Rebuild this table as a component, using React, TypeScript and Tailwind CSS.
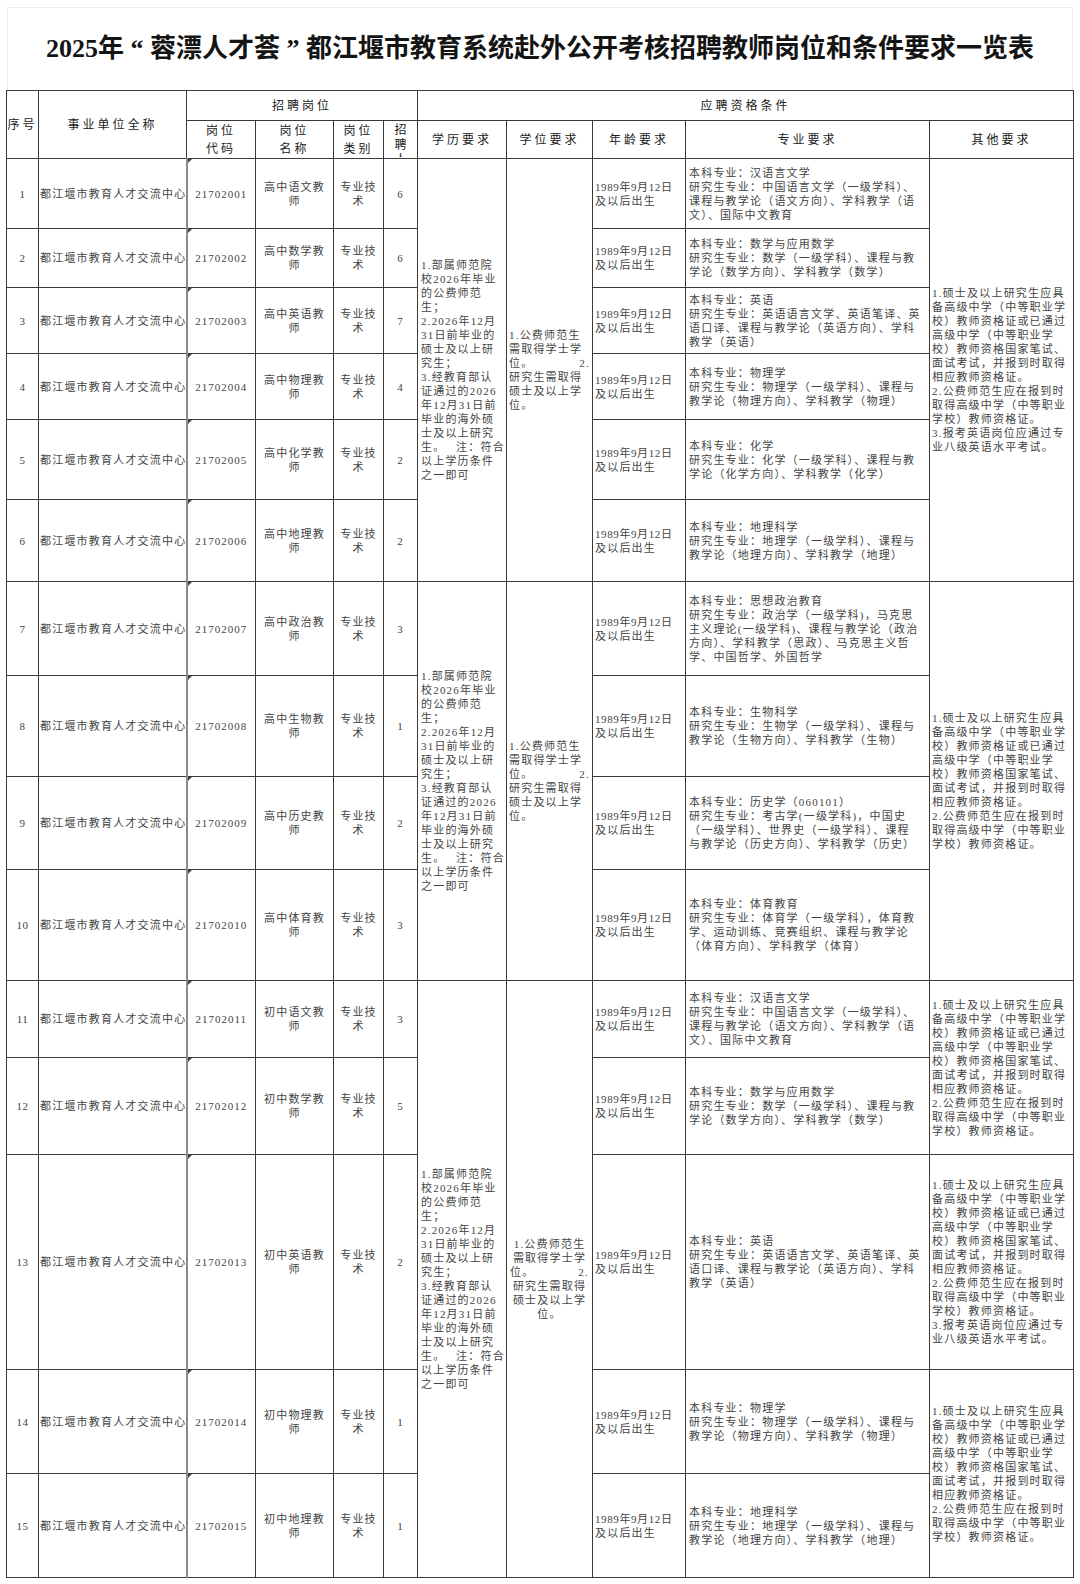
import React from "react";

const B = "border border-[#3a3a3a] p-0 align-middle";

const M: Record<string, string[]> = {
  yuwen: [
    "本科专业：汉语言文学",
    "研究生专业：中国语言文学（一级学科）、",
    "课程与教学论（语文方向）、学科教学（语",
    "文）、国际中文教育",
  ],
  shuxue: [
    "本科专业：数学与应用数学",
    "研究生专业：数学（一级学科）、课程与教",
    "学论（数学方向）、学科教学（数学）",
  ],
  yingyu: [
    "本科专业：英语",
    "研究生专业：英语语言文学、英语笔译、英",
    "语口译、课程与教学论（英语方向）、学科",
    "教学（英语）",
  ],
  wuli: [
    "本科专业：物理学",
    "研究生专业：物理学（一级学科）、课程与",
    "教学论（物理方向）、学科教学（物理）",
  ],
  huaxue: [
    "本科专业：化学",
    "研究生专业：化学（一级学科）、课程与教",
    "学论（化学方向）、学科教学（化学）",
  ],
  dili: [
    "本科专业：地理科学",
    "研究生专业：地理学（一级学科）、课程与",
    "教学论（地理方向）、学科教学（地理）",
  ],
  zhengzhi: [
    "本科专业：思想政治教育",
    "研究生专业：政治学（一级学科)，马克思",
    "主义理论(一级学科)、课程与教学论（政治",
    "方向）、学科教学（思政）、马克思主义哲",
    "学、中国哲学、外国哲学",
  ],
  shengwu: [
    "本科专业：生物科学",
    "研究生专业：生物学（一级学科）、课程与",
    "教学论（生物方向）、学科教学（生物）",
  ],
  lishi: [
    "本科专业：历史学（060101）",
    "研究生专业：考古学(一级学科)，中国史",
    "（一级学科）、世界史（一级学科）、课程",
    "与教学论（历史方向）、学科教学（历史）",
  ],
  tiyu: [
    "本科专业：体育教育",
    "研究生专业：体育学（一级学科），体育教",
    "学、运动训练、竞赛组织、课程与教学论",
    "（体育方向）、学科教学（体育）",
  ],
};

type Row = { no: string; code: string; name: string; cnt: string; h: string; major: string[] };

const rows: Row[] = [
  { no: "1", code: "21702001", name: "高中语文教", cnt: "6", h: "h-[70px]", major: M.yuwen },
  { no: "2", code: "21702002", name: "高中数学教", cnt: "6", h: "h-[59px]", major: M.shuxue },
  { no: "3", code: "21702003", name: "高中英语教", cnt: "7", h: "h-[66px]", major: M.yingyu },
  { no: "4", code: "21702004", name: "高中物理教", cnt: "4", h: "h-[66px]", major: M.wuli },
  { no: "5", code: "21702005", name: "高中化学教", cnt: "2", h: "h-[80px]", major: M.huaxue },
  { no: "6", code: "21702006", name: "高中地理教", cnt: "2", h: "h-[82px]", major: M.dili },
  { no: "7", code: "21702007", name: "高中政治教", cnt: "3", h: "h-[94px]", major: M.zhengzhi },
  { no: "8", code: "21702008", name: "高中生物教", cnt: "1", h: "h-[101px]", major: M.shengwu },
  { no: "9", code: "21702009", name: "高中历史教", cnt: "2", h: "h-[93px]", major: M.lishi },
  { no: "10", code: "21702010", name: "高中体育教", cnt: "3", h: "h-[111px]", major: M.tiyu },
  { no: "11", code: "21702011", name: "初中语文教", cnt: "3", h: "h-[77px]", major: M.yuwen },
  { no: "12", code: "21702012", name: "初中数学教", cnt: "5", h: "h-[97px]", major: M.shuxue },
  { no: "13", code: "21702013", name: "初中英语教", cnt: "2", h: "h-[215px]", major: M.yingyu },
  { no: "14", code: "21702014", name: "初中物理教", cnt: "1", h: "h-[104px]", major: M.wuli },
  { no: "15", code: "21702015", name: "初中地理教", cnt: "1", h: "h-[104px]", major: M.dili },
];

const XUELI = [
  "1.部属师范院",
  "校2026年毕业",
  "的公费师范",
  "生；",
  "2.2026年12月",
  "31日前毕业的",
  "硕士及以上研",
  "究生；",
  "3.经教育部认",
  "证通过的2026",
  "年12月31日前",
  "毕业的海外硕",
  "士及以上研究",
  "生。\u3000\u00a0注：符合",
  "以上学历条件",
  "之一即可",
];

const QITA_BASE = [
  "1.硕士及以上研究生应具",
  "备高级中学（中等职业学",
  "校）教师资格证或已通过",
  "高级中学（中等职业学",
  "校）教师资格国家笔试、",
  "面试考试，并报到时取得",
  "相应教师资格证。",
  "2.公费师范生应在报到时",
  "取得高级中学（中等职业",
  "学校）教师资格证。",
];
const QITA_EN = [...QITA_BASE, "3.报考英语岗位应通过专", "业八级英语水平考试。"];

function Lines({ lines }: { lines: string[] }) {
  return (
    <>
      {lines.map((l, i) => (
        <div key={i} className="whitespace-pre">
          {l}
        </div>
      ))}
    </>
  );
}

function XueWei({ center }: { center?: boolean }) {
  return (
    <div className={center ? "px-[3px] text-center" : "px-[2px]"}>
      <div className="whitespace-pre">1.公费师范生</div>
      <div className="whitespace-pre">需取得学士学</div>
      <div className="flex justify-between">
        <span>位。</span>
        <span>2.</span>
      </div>
      <div className="whitespace-pre">研究生需取得</div>
      <div className="whitespace-pre">硕士及以上学</div>
      <div className="whitespace-pre">位。</div>
    </div>
  );
}

function QitaCell({ rowSpan, lines }: { rowSpan: number; lines: string[] }) {
  return (
    <td rowSpan={rowSpan} className={B + " pl-[2px]"}>
      <Lines lines={lines} />
    </td>
  );
}

export default function App() {
  return (
    <div className="bg-white w-[1080px] h-[1584px] pt-[7px] pl-[6px] font-['Liberation_Serif','Noto_Sans_CJK_SC',serif] text-[#444]">
      <div className="ml-[1px] w-[1066px] h-[83px] border-t border-l border-r border-[#ececec] flex items-center justify-center">
        <h1 className="text-[26px] font-bold text-[#141414] leading-none">
          2025年<span className="inline-block w-[26px] text-center">“</span>蓉漂人才荟
          <span className="inline-block w-[26px] text-center">”</span>都江堰市教育系统赴外公开考核招聘教师岗位和条件要求一览表
        </h1>
      </div>
      <table className="border-collapse table-fixed w-[1067px] text-[11px] leading-[14px] tracking-[1.2px]">
        <colgroup>
          <col className="w-[32px]" />
          <col className="w-[148px]" />
          <col className="w-[69px]" />
          <col className="w-[78px]" />
          <col className="w-[50px]" />
          <col className="w-[34px]" />
          <col className="w-[89px]" />
          <col className="w-[86px]" />
          <col className="w-[93px]" />
          <col className="w-[244px]" />
          <col className="w-[144px]" />
        </colgroup>
        <thead className="text-[12px] leading-[18px] tracking-[3px] text-[#222]">
          <tr className="h-[30px]">
            <td rowSpan={2} className={B + " text-center"}>
              序号
            </td>
            <td rowSpan={2} className={B + " text-center"}>
              事业单位全称
            </td>
            <td colSpan={4} className={B + " text-center"}>
              招聘岗位
            </td>
            <td colSpan={5} className={B + " text-center"}>
              应聘资格条件
            </td>
          </tr>
          <tr className="h-[38px]">
            <td className={B + " text-center"}>
              <div>岗位</div>
              <div>代码</div>
            </td>
            <td className={B + " text-center"}>
              <div>岗位</div>
              <div>名称</div>
            </td>
            <td className={B + " text-center"}>
              <div>岗位</div>
              <div>类别</div>
            </td>
            <td className="border border-[#3a3a3a] p-0 align-top text-center">
              <div className="h-[36px] overflow-hidden pt-[2px] leading-[15px] pl-[3px]">
                <div>招</div>
                <div>聘</div>
                <div>人</div>
                <div>数</div>
              </div>
            </td>
            <td className={B + " text-center"}>学历要求</td>
            <td className={B + " text-center"}>学位要求</td>
            <td className={B + " text-center"}>年龄要求</td>
            <td className={B + " text-center"}>专业要求</td>
            <td className={B + " text-center"}>其他要求</td>
          </tr>
        </thead>
        <tbody>
          {rows.map((r, i) => (
            <tr key={r.no} className={r.h}>
              <td className={B + " text-center tracking-[0.5px]"}>{r.no}</td>
              <td className={B + " overflow-hidden whitespace-nowrap pl-[1px]"}>都江堰市教育人才交流中心</td>
              <td className="relative border border-[#3a3a3a] border-l-2 border-l-[#8a8a8a] p-0 align-middle text-center tracking-[1px]">
                <span className="absolute left-0 top-0 w-0 h-0 border-t-[4px] border-t-[#444] border-r-[4px] border-r-transparent" />
                {r.code}
              </td>
              <td className={B + " text-center"}>
                <div>{r.name}</div>
                <div>师</div>
              </td>
              <td className={B + " text-center"}>
                <div>专业技</div>
                <div>术</div>
              </td>
              <td className={B + " text-center"}>{r.cnt}</td>
              {(i === 0 || i === 6 || i === 10) && (
                <td rowSpan={i === 0 ? 6 : i === 6 ? 4 : 5} className={B + " pl-[3px]"}>
                  <Lines lines={XUELI} />
                </td>
              )}
              {(i === 0 || i === 6 || i === 10) && (
                <td rowSpan={i === 0 ? 6 : i === 6 ? 4 : 5} className={B}>
                  <XueWei center={i === 10} />
                </td>
              )}
              <td className={B + " pl-[2px]"}>
                <div className="whitespace-nowrap tracking-[0.6px]">1989年9月12日</div>
                <div>及以后出生</div>
              </td>
              <td className={B + " pl-[3px]"}>
                <Lines lines={r.major} />
              </td>
              {i === 0 && <QitaCell rowSpan={6} lines={QITA_EN} />}
              {i === 6 && <QitaCell rowSpan={4} lines={QITA_BASE} />}
              {i === 10 && <QitaCell rowSpan={2} lines={QITA_BASE} />}
              {i === 12 && <QitaCell rowSpan={1} lines={QITA_EN} />}
              {i === 13 && <QitaCell rowSpan={2} lines={QITA_BASE} />}
            </tr>
          ))}
        </tbody>
      </table>
    </div>
  );
}
